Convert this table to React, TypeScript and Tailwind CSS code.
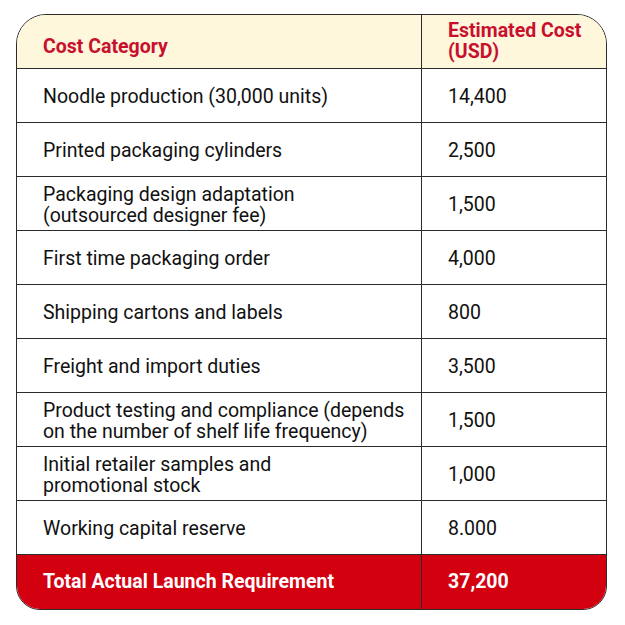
import React from 'react';

const rows: [string, string][] = [
  ['Noodle production (30,000 units)', '14,400'],
  ['Printed packaging cylinders', '2,500'],
  ['Packaging design adaptation\n(outsourced designer fee)', '1,500'],
  ['First time packaging order', '4,000'],
  ['Shipping cartons and labels', '800'],
  ['Freight and import duties', '3,500'],
  ['Product testing and compliance (depends\non the number of shelf life frequency)', '1,500'],
  ['Initial retailer samples and\npromotional stock', '1,000'],
  ['Working capital reserve', '8.000'],
];

export default function App() {
  return (
    <div className="w-[625px] h-[625px] bg-white pt-[14px] pl-[16px]" style={{ fontFamily: 'Roboto, "Liberation Sans", sans-serif' }}>
      <div className="w-[591px] rounded-t-[30px] rounded-b-[24px] border-[1.5px] border-[#2b2b2b] overflow-hidden">
        {/* header */}
        <div className="flex h-[54px] bg-[#fef7dc] border-b border-[#2b2b2b]">
          <div className="w-[405px] border-r border-[#2b2b2b] flex items-center pl-[26px] pt-[10px] text-[19.5px] font-bold text-[#c8102e]">
            Cost Category
          </div>
          <div className="flex-1 flex items-center pl-[26px] pb-[2px] text-[19.5px] font-bold leading-[21px] text-[#c8102e]">
            Estimated Cost<br />(USD)
          </div>
        </div>
        {rows.map(([label, cost], i) => (
          <div key={i} className="flex h-[54px] border-b border-[#2b2b2b]">
            <div className="w-[405px] border-r border-[#2b2b2b] flex items-center pl-[26px] pt-[2px] text-[19.5px] leading-[21px] text-[#111] whitespace-pre-line">
              {label}
            </div>
            <div className="flex-1 flex items-center pl-[26px] pt-[2px] text-[19.5px] text-[#111]">
              {cost}
            </div>
          </div>
        ))}
        {/* total */}
        <div className="flex h-[54px] bg-[#d3000f] text-white font-bold text-[19.5px]">
          <div className="w-[405px] border-r border-[#2b2b2b] flex items-center pl-[26px] pb-[1px]">
            Total Actual Launch Requirement
          </div>
          <div className="flex-1 flex items-center pl-[26px] pb-[1px]">37,200</div>
        </div>
      </div>
    </div>
  );
}
